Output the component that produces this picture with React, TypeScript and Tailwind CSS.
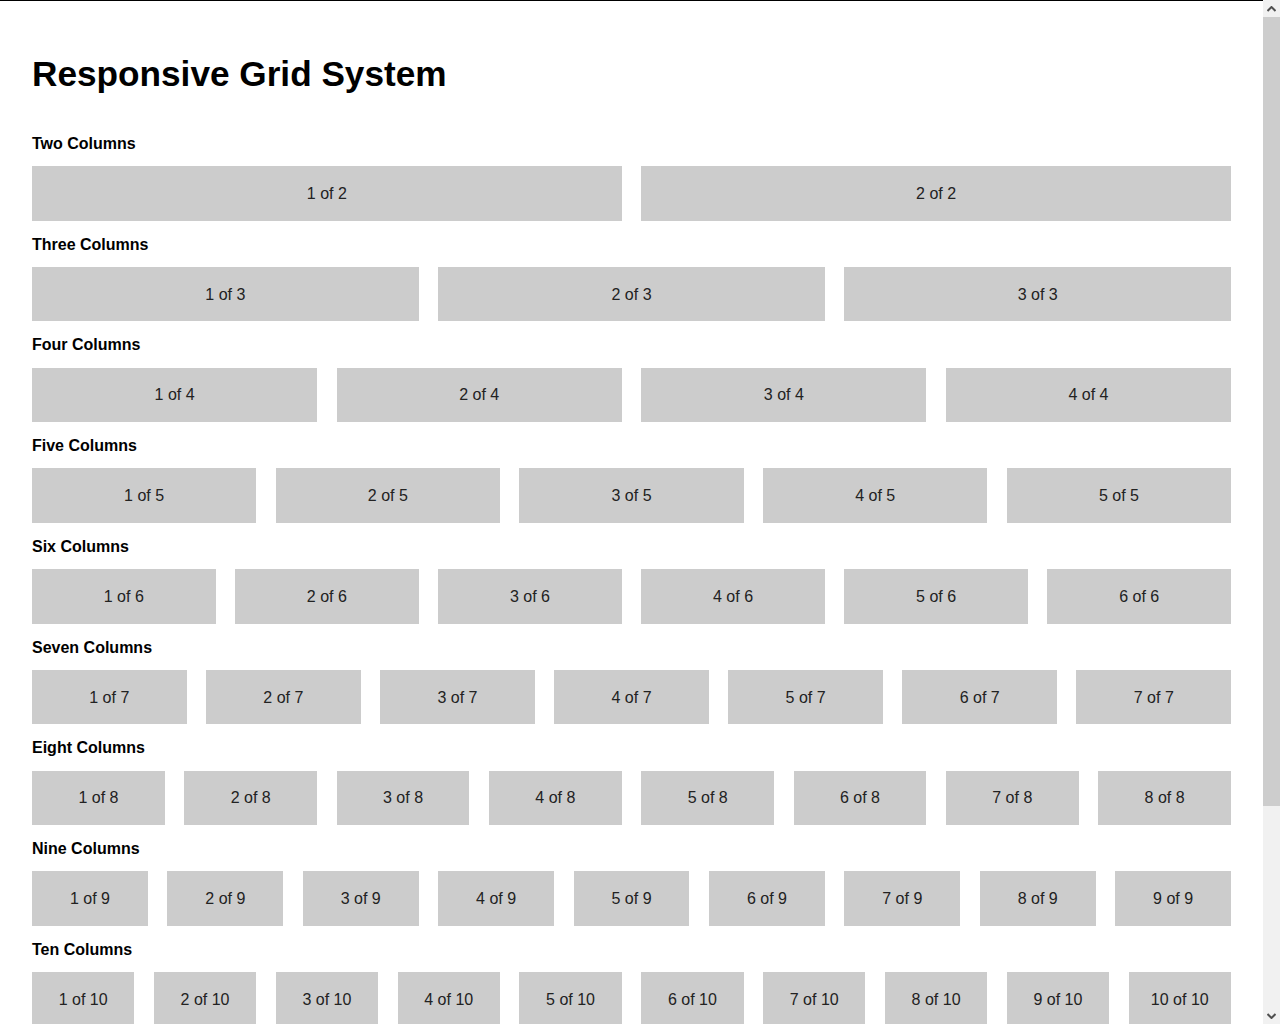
import React from 'react';

const sections = [
  { title: 'Two Columns', count: 2 },
  { title: 'Three Columns', count: 3 },
  { title: 'Four Columns', count: 4 },
  { title: 'Five Columns', count: 5 },
  { title: 'Six Columns', count: 6 },
  { title: 'Seven Columns', count: 7 },
  { title: 'Eight Columns', count: 8 },
  { title: 'Nine Columns', count: 9 },
  { title: 'Ten Columns', count: 10 },
  { title: 'Eleven Columns', count: 11 },
  { title: 'Twelve Columns', count: 12 },
];

const GridRow: React.FC<{ title: string; count: number }> = ({ title, count }) => {
  return (
    <section className="flex flex-col">
      <h3 className="text-[16px] leading-[19.25px] font-bold text-black mb-[13px]">{title}</h3>
      <div className="flex gap-[19.5px]">
        {Array.from({ length: count }, (_, i) => (
          <div
            key={i}
            className="flex-1 min-w-0 bg-[#cccccc] pt-[18.6px] pb-[17.4px] text-center text-[16px] leading-[18.5px] text-[#222222]"
          >
            {i + 1} of {count}
          </div>
        ))}
      </div>
    </section>
  );
};

// window scrollbar as seen in the screenshot
const ScrollBar: React.FC = () => (
  <div className="fixed top-0 right-0 h-screen w-[17px] bg-[#f1f1f1] flex flex-col">
    <div className="h-[17px] flex items-center justify-center">
      <svg width="9" height="6" viewBox="0 0 9 6">
        <path d="M0.5 5 L4.5 1 L8.5 5" fill="none" stroke="#505050" strokeWidth="2" />
      </svg>
    </div>
    <div className="h-[789px] bg-[#cdcdcd]" />
    <div className="flex-1" />
    <div className="h-[17px] flex items-center justify-center">
      <svg width="9" height="6" viewBox="0 0 9 6">
        <path d="M0.5 1 L4.5 5 L8.5 1" fill="none" stroke="#505050" strokeWidth="2" />
      </svg>
    </div>
  </div>
);

export default function App() {
  return (
    <div
      className="bg-white border-t border-black"
      style={{ fontFamily: '"Liberation Sans", Arial, sans-serif' }}
    >
      <div className="pl-8 pr-[49px] pt-[53px] pb-[57px]">
        <h1 className="text-[35.2px] leading-[40px] font-bold text-black mb-[40px]">Responsive Grid System</h1>
        <div className="flex flex-col gap-[14px]">
          {sections.map(s => (
            <GridRow key={s.count} title={s.title} count={s.count} />
          ))}
        </div>
      </div>
      <ScrollBar />
    </div>
  );
}
